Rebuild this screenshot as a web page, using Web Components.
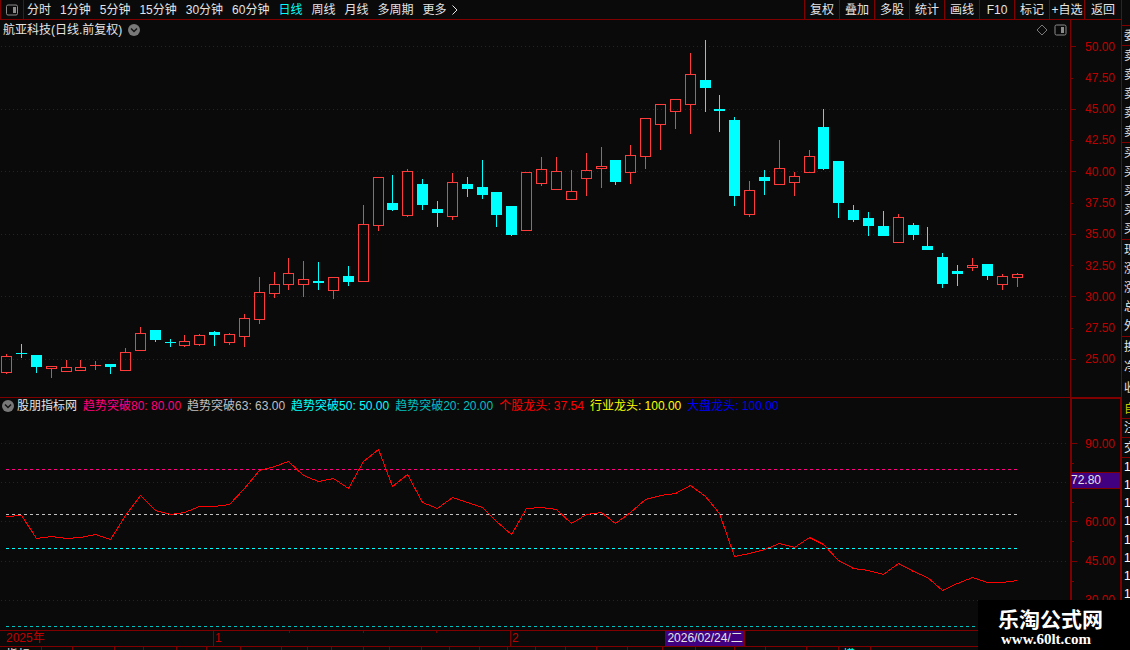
<!DOCTYPE html>
<html lang="zh-CN">
<head>
<meta charset="utf-8">
<title>航亚科技 日线</title>
<style>
  :root {
    --bg: #0a0a0a;
    --line: #800000;
    --scale: #c00000;
    --text: #e4e4e4;
    --up: #ff3c3c;
    --down: #00ffff;
    --mark: #400080;
  }
  html, body { height: 100%; }
  body {
    margin: 0;
    background: var(--bg);
    color: var(--text);
    font: 12px/16px "Liberation Sans", "Noto Sans CJK SC", sans-serif;
    overflow: hidden;
  }
</style>
</head>
<body>
<stock-app></stock-app>
<script>
const define = (name, html, setup) => {
  const template = document.createElement('template');
  template.innerHTML = html;
  customElements.define(name, class extends HTMLElement {
    constructor() {
      super();
      this.attachShadow({ mode: 'open' }).append(template.content.cloneNode(true));
    }
    connectedCallback() { if (setup) setup(this, this.shadowRoot); }
  });
};

/* Toolbar entries */
define('tool-item', `
  <style>
    :host { display: flex; }
    button { flex: 1; display: flex; align-items: center; justify-content: center; gap: 5px; margin: 0; padding: 0; border: 0; background: none; color: inherit; font: inherit; white-space: nowrap; cursor: pointer; }
    :host([active]) { color: var(--down); }
  </style>
  <button type="button"><slot></slot></button>`);

define('tool-bar', `
  <style>
    :host { display: flex; justify-content: space-between; border-bottom: 1px solid var(--line); box-sizing: border-box; height: 20px; }
    nav { display: flex; }
    .panel { width: 22px; border: solid var(--line); border-width: 0 1px; }
    .periods { display: flex; gap: 9px; padding-left: 3px; }
    .tools tool-item { width: 34px; border-left: 1px solid var(--line); }
    .tools tool-item:last-child { width: 36px; }
    svg { display: block; }
  </style>
  <nav aria-label="周期">
    <tool-item class="panel"><svg width="14" height="12" viewBox="0 0 14 12" role="img" aria-label="面板"><rect x="1.500" y="1" width="11" height="10" rx="1.500" fill="none" stroke="#8c8c8c"/><rect x="8" y="3" width="3" height="6" fill="#8c8c8c"/></svg></tool-item>
    <div class="periods">
      <tool-item>分时</tool-item><tool-item>1分钟</tool-item><tool-item>5分钟</tool-item><tool-item>15分钟</tool-item><tool-item>30分钟</tool-item><tool-item>60分钟</tool-item><tool-item active>日线</tool-item><tool-item>周线</tool-item><tool-item>月线</tool-item><tool-item>多周期</tool-item>
      <tool-item>更多<svg width="6" height="10" viewBox="0 0 6 10" aria-hidden="true"><path d="M.5.5 5 5 .5 9.500" fill="none" stroke="currentColor"/></svg></tool-item>
    </div>
  </nav>
  <nav class="tools" aria-label="工具">
    <tool-item>复权</tool-item><tool-item>叠加</tool-item><tool-item>多股</tool-item><tool-item>统计</tool-item><tool-item>画线</tool-item><tool-item>F10</tool-item><tool-item>标记</tool-item><tool-item>+自选</tool-item><tool-item>返回</tool-item>
  </nav>`);

define('round-toggle', `
  <style>
    :host { display: flex; }
    button { display: block; margin: 0; padding: 0; border: 0; background: none; cursor: pointer; }
    svg { display: block; }
  </style>
  <button type="button" aria-label="展开"><svg width="12" height="12" viewBox="0 0 12 12"><circle cx="6" cy="6" r="6" fill="#787878"/><path d="M3 4.500 6 7.500 9 4.500" fill="none" stroke="#141414" stroke-width="1.500"/></svg></button>`);

/* Shared geometry: one column per trading day, snapped to whole pixels */
const dayX = i => Math.floor(6.6 + i * 14.86);
const gridLine = y => `<path d="M1 ${y}.5H1067" stroke="#780000" stroke-dasharray="1 3"/>`;

/* [rising, body top, body bottom, wick top, wick bottom] */
const CANDLES = [
  [1,356,373,354,374],[0,353,354,344,358],[0,355,367,355,373],[1,366,369,366,378],[1,367,372,360,372],
  [1,367,371,360,371],[1,365,366,361,370],[0,364,367,364,374],[1,352,371,348,371],[1,333,351,327,351],
  [0,330,340,330,342],[0,342,343,339,347],[1,341,346,335,347],[1,335,345,334,346],[0,332,335,331,346],
  [1,334,343,333,345],[1,318,337,314,347],[1,292,320,277,324],[1,284,294,272,298],[1,273,285,258,290],
  [1,279,285,261,297],[0,281,283,262,290],[1,277,291,277,299],[0,276,282,266,286],[1,224,282,205,282],
  [1,177,226,177,231],[0,203,210,175,211],[1,171,216,169,217],[0,184,205,179,210],[0,209,213,201,227],
  [1,182,217,173,220],[0,184,189,177,197],[0,187,195,160,199],[0,192,215,192,227],[0,206,235,206,236],
  [1,172,231,172,231],[1,169,184,157,186],[1,171,190,157,190],[1,191,200,170,200],[1,170,179,153,196],
  [1,166,169,147,188],[0,160,182,160,185],[1,155,173,145,184],[1,118,157,118,169],[1,104,125,104,150],
  [1,99,112,99,129],[1,74,105,53,134],[0,80,88,40,112],[0,109,111,95,132],[0,120,196,117,206],
  [1,190,215,181,217],[0,177,181,170,195],[1,168,185,140,185],[1,176,183,172,196],[1,156,173,150,173],
  [0,127,169,109,170],[0,161,203,161,218],[0,210,220,205,222],[0,218,226,212,236],[0,226,236,211,236],
  [1,217,243,214,243],[0,225,235,223,240],[0,246,250,227,250],[0,257,284,253,288],[0,271,274,265,286],
  [1,265,268,258,271],[0,264,276,264,280],[1,276,285,274,290],[1,274,278,273,287]
];

define('candle-chart', `
  <style>
    :host { display: block; }
    svg { display: block; width: 100%; height: 100%; }
    .up { fill: var(--up); }
    .down { fill: var(--down); }
  </style>
  <svg viewBox="0 20 1070 377" preserveAspectRatio="none" shape-rendering="crispEdges" role="img" aria-label="日线走势"></svg>`,
  (el, root) => {
    let out = [46, 109, 171, 234, 296, 359].map(gridLine).join('');
    CANDLES.forEach(([up, top, bottom, high, low], i) => {
      const x = dayX(i), l = x - 5;
      let d = `M${x} ${high}h1V${top}h-1zM${x} ${bottom}h1V${low}h-1z`;
      if (bottom - top === 1) d = `M${x} ${high}h1V${low}h-1z`;
      d += `M${l} ${top}h11V${bottom}h-11z`;
      if (up && bottom - top > 2) d += `M${l + 1} ${top + 1}V${bottom - 1}h9V${top + 1}z`;
      out += `<path class="${up ? 'up' : 'down'}" d="${d}"/>`;
    });
    root.querySelector('svg').innerHTML = out;
  });

const TREND = [516,515,538,536,538,537,534,539,515,495,510,514,512,506,506,504,488,470,466,461,475,481,478,488,461,449,486,474,502,508,497,502,507,521,534,508,507,509,523,514,512,523,512,499,495,493,485,496,513,556,553,549,543,547,537,544,560,568,570,574,563,571,577,590,583,577,582,582,580];

define('trend-chart', `
  <style>
    :host { display: block; }
    svg { display: block; width: 100%; height: 100%; }
  </style>
  <svg viewBox="0 398 1070 232" preserveAspectRatio="none" shape-rendering="crispEdges" role="img" aria-label="个股龙头"></svg>`,
  (el, root) => {
    const level = (y, c) => `<path d="M6 ${y}.5H1018" stroke="${c}" stroke-dasharray="3 3"/>`;
    const points = TREND.map((y, i) => `${dayX(i) + 0.5},${y + 0.5}`).join(' ');
    root.querySelector('svg').innerHTML =
      [443, 482, 521, 561, 600].map(gridLine).join('') +
      level(469, '#ff0080') + level(514, '#c0c0c0') + level(548, '#00ffff') + level(626, '#00c0c0') +
      `<polyline points="${points}" fill="none" stroke="#ff0000"/>`;
  });

/* Vertical scale: evenly spaced labels, ticks on the left edge */
define('value-axis', `
  <style>
    :host { display: grid; grid-auto-rows: 1fr; align-items: center; position: relative; box-sizing: border-box; color: var(--scale); }
    svg { position: absolute; left: 0; top: 0; width: 5px; height: 100%; }
  </style>
  <svg preserveAspectRatio="none" shape-rendering="crispEdges" aria-hidden="true"></svg>
  <slot></slot>`,
  (el, root) => {
    const svg = root.querySelector('svg');
    svg.setAttribute('viewBox', el.getAttribute('range'));
    const ticks = (name, w) => el.getAttribute(name).split(' ').map(y => `M0 ${y}.5h${w}`).join('');
    svg.innerHTML = `<path d="${ticks('major', 5)}${ticks('minor', 2)}" stroke="#800000"/>`;
  });

define('price-panel', `
  <style>
    :host { display: grid; grid-template-columns: minmax(0, 1fr) 51px; border-bottom: 1px solid var(--line); }
    .plot { position: relative; }
    candle-chart { position: absolute; inset: 0; }
    header { position: relative; display: flex; justify-content: space-between; align-items: center; height: 19px; padding: 0 3px; }
    .name, .tools { display: flex; align-items: center; gap: 6px; }
    h1 { margin: 0; font: inherit; }
    button { display: block; margin: 0; padding: 0; border: 0; background: none; cursor: pointer; }
    svg { display: block; }
    value-axis { border-left: 1px solid var(--line); padding: 11px 0 22px 14px; }
  </style>
  <div class="plot">
    <candle-chart></candle-chart>
    <header>
      <div class="name"><h1>航亚科技(日线.前复权)</h1><round-toggle></round-toggle></div>
      <div class="tools">
        <button type="button" aria-label="标记"><svg width="12" height="12" viewBox="0 0 12 12"><path d="M6 1 11 6 6 11 1 6z" fill="none" stroke="#787878"/></svg></button>
        <button type="button" aria-label="侧栏"><svg width="13" height="12" viewBox="0 0 13 12"><rect x="1" y="1" width="11" height="10" rx="1.500" fill="none" stroke="#8c8c8c"/><rect x="7" y="3" width="3" height="6" fill="#8c8c8c"/></svg></button>
      </div>
    </header>
  </div>
  <value-axis range="0 20 5 377" major="46 109 171 234 296 359" minor="78 140 203 265 328">
    <span>50.00</span><span>47.50</span><span>45.00</span><span>42.50</span><span>40.00</span><span>37.50</span><span>35.00</span><span>32.50</span><span>30.00</span><span>27.50</span><span>25.00</span>
  </value-axis>`);

define('indicator-panel', `
  <style>
    :host { display: grid; grid-template-columns: minmax(0, 1fr) 51px; }
    .plot { position: relative; min-height: 0; }
    trend-chart { position: absolute; inset: 0; }
    header { position: relative; display: flex; align-items: center; gap: 3px; padding-left: 2px; white-space: nowrap; }
    ul { display: flex; gap: 6px; margin: 0; padding: 0; list-style: none; }
    value-axis { border: solid var(--line); border-width: 1px 1px 0 2px; padding: 25px 0 10px 13px; }
    .current { position: absolute; left: -1px; right: 0; top: 73px; height: 15px; line-height: 15px; border: solid var(--line); border-width: 1px 0; background: var(--mark); color: var(--text); }
  </style>
  <div class="plot">
    <trend-chart></trend-chart>
    <header>
      <round-toggle></round-toggle>
      <ul>
        <li>股朋指标网</li>
        <li style="color:#ff0080">趋势突破80: 80.00</li>
        <li style="color:#c0c0c0">趋势突破63: 63.00</li>
        <li style="color:#00ffff">趋势突破50: 50.00</li>
        <li style="color:#00c0c0">趋势突破20: 20.00</li>
        <li style="color:#ff0000">个股龙头: 37.54</li>
        <li style="color:#ffff00">行业龙头: 100.00</li>
        <li style="color:#0000ff">大盘龙头: 100.00</li>
      </ul>
    </header>
  </div>
  <value-axis range="0 399 5 231" major="443 482 521 561 600" minor="463 502 541 581">
    <span>90.00</span><span></span><span>60.00</span><span>45.00</span><span>30.00</span>
    <div class="current">72.80</div>
  </value-axis>`);

define('time-axis', `
  <style>
    :host { display: grid; grid-template-columns: 213fr 297fr 611fr; position: relative; border: solid var(--line); border-width: 1px 0; color: var(--scale); line-height: 15px; }
    .year { padding-left: 6px; }
    .month { border-left: 1px solid var(--line); padding-left: 1px; }
    .ticks { display: grid; grid-template-columns: repeat(4, 1fr); height: 2px; margin-bottom: -2px; }
    .ticks i + i { border-left: 1px solid var(--line); }
    .picked { position: absolute; left: 59%; top: 0; bottom: 0; margin-left: 4px; padding: 0 1px; border: solid var(--line); border-width: 0 1px; background: var(--mark); color: var(--text); white-space: nowrap; }
  </style>
  <span class="year">2025年</span>
  <div class="month"><div class="ticks"><i></i><i></i><i></i><i></i></div>1</div>
  <div class="month">2</div>
  <time class="picked" datetime="2026-02-24">2026/02/24/二</time>`);

/* Tabs that run below the lower edge of the window */
define('bottom-tabs', `
  <style>
    :host { display: flex; overflow: hidden; }
    span { box-sizing: border-box; height: 20px; border-right: 1px solid var(--line); padding: 0 6px; flex: none; }
    .on { padding: 0 4px; color: var(--down); }
  </style>`,
  (el, root) => {
    const edges = [0,42,73,115,144,177,207,241,282,308,332,364,390,422,450,480,508,536,566,597,628,663,696,735,766,807,839,871];
    edges.slice(1).forEach((x, i) => {
      const tab = document.createElement('span');
      tab.style.width = (x - edges[i]) + 'px';
      if (i === 0) tab.textContent = '指标';
      if (i === 26) { tab.textContent = '模板'; tab.className = 'on'; }
      root.append(tab);
    });
  });

/* Quote column, only its left edge is open */
define('quote-rows', `
  <style>
    :host { display: grid; grid-auto-rows: 1fr; align-items: center; box-sizing: border-box; border-top: 1px solid var(--line); padding-left: 2px; }
  </style>
  <slot></slot>`);

define('quote-strip', `
  <style>
    :host { display: flex; flex-direction: column; width: 8px; border-left: 1px solid var(--line); padding-top: 25px; overflow: hidden; white-space: nowrap; }
    quote-rows { flex: none; }
    .one { height: 20px; }
    .five { height: 97px; }
    .three { height: 62px; }
    .head { height: 19px; }
    .yellow { color: #c8c800; border-top-color: transparent; }
    .deals { height: 146px; color: #fff; }
  </style>
  <quote-rows class="one"><span>委</span></quote-rows>
  <quote-rows class="five"><span>卖</span><span>卖</span><span>卖</span><span>卖</span><span>卖</span></quote-rows>
  <quote-rows class="five"><span>买</span><span>买</span><span>买</span><span>买</span><span>买</span></quote-rows>
  <quote-rows class="five"><span>现</span><span>涨</span><span>涨</span><span>总</span><span>外</span></quote-rows>
  <quote-rows class="three"><span>换</span><span>净</span><span>收</span></quote-rows>
  <quote-rows class="one yellow"><span>自</span></quote-rows>
  <quote-rows class="head"><span>注</span></quote-rows>
  <quote-rows class="one"><span>交</span></quote-rows>
  <quote-rows class="deals"><span>1</span><span>1</span><span>1</span><span>1</span><span>1</span><span>1</span><span>1</span><span>1</span></quote-rows>`);

define('site-mark', `
  <style>
    :host { display: flex; flex-direction: column; position: fixed; right: 0; bottom: 0; box-sizing: border-box; width: 152px; height: 50px; padding: 6px 0 0 20px; background: #000; color: #fff; }
    strong { font: bold 21px/25px "Noto Sans CJK SC", sans-serif; white-space: nowrap; }
    a { padding-left: 3px; color: inherit; text-decoration: none; font: bold 15px/17px "Liberation Serif", serif; }
  </style>
  <strong>乐淘公式网</strong><a href="#">www.60lt.com</a>`);

define('stock-app', `
  <style>
    :host { display: grid; grid-template-columns: minmax(0, 1fr) auto; height: 100vh; }
    main { display: grid; grid-template-rows: 20px minmax(0, 378fr) minmax(0, 232fr) 17px 3px; min-width: 0; min-height: 0; }
    quote-strip { min-height: 0; }
  </style>
  <main>
    <tool-bar></tool-bar>
    <price-panel></price-panel>
    <indicator-panel></indicator-panel>
    <time-axis></time-axis>
    <bottom-tabs></bottom-tabs>
  </main>
  <quote-strip></quote-strip>
  <site-mark></site-mark>`);
</script>
</body>
</html>
